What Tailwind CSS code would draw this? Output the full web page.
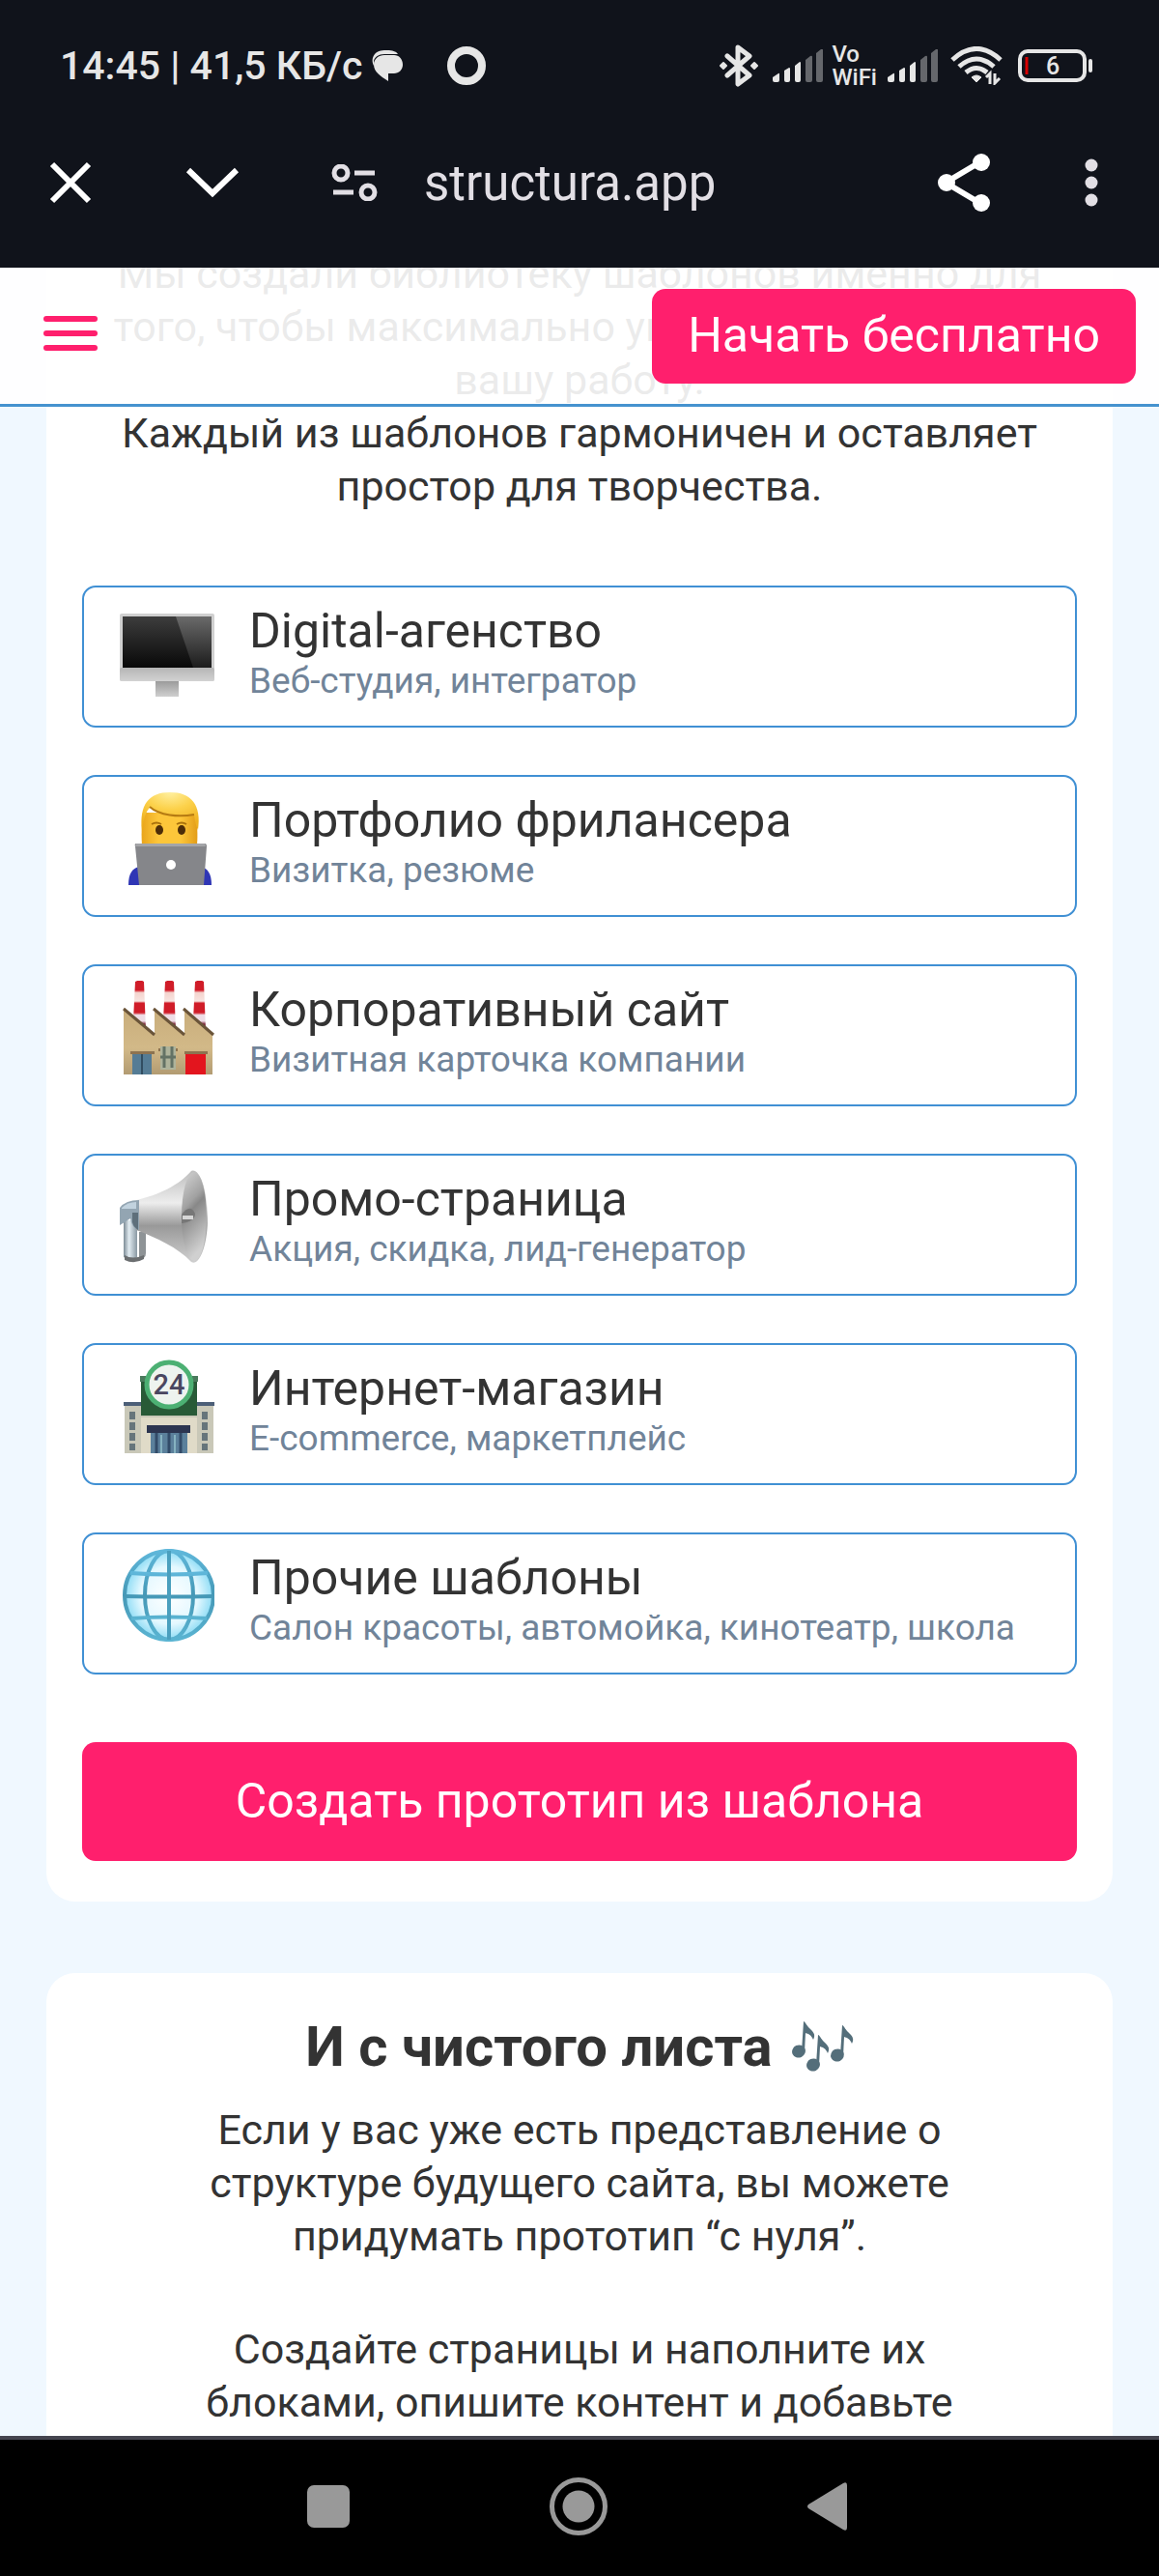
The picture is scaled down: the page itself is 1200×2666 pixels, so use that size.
<!DOCTYPE html>
<html lang="ru">
<head>
  <meta charset="utf-8">
  <meta name="viewport" content="width=device-width, initial-scale=1">
  <title>structura.app</title>
  <script src="https://cdn.jsdelivr.net/npm/@tailwindcss/browser@4"></script>
</head>
<body class="flex h-screen flex-col overflow-hidden bg-black font-['Roboto',sans-serif] text-[#333]">

  <!-- status bar + browser bar -->
  <div class="shrink-0 bg-[#10131b] pb-[35px]">
    <div class="flex h-[136px] items-center pl-[62px] pr-[68px] text-[#e6e6e6]">
      <span class="text-[41px] font-medium leading-none">14:45 | 41,5 КБ/с</span>
      <svg class="ml-[10px] h-8 w-8" viewBox="0 0 32 32" fill="currentColor">
        <path d="M2 16C0 12 0 8 3 4 6 0 12 0 16 0c5 0 9 1 11 4H13C7 4 3 7 2 11z"/>
        <path d="M13 5h10c5 0 9 4 9 10 0 5-4 9-9 9h-6v8C9 27 2 22 2 15 2 9 7 5 13 5z"/>
      </svg>
      <svg class="ml-[46px] h-10 w-10" viewBox="0 0 40 40" fill="none" stroke="currentColor" stroke-width="8">
        <circle cx="20" cy="20" r="16"/>
      </svg>

      <svg class="ml-auto h-11 w-10" viewBox="0 0 40 44" fill="none" stroke="currentColor" stroke-width="5" stroke-linejoin="round" stroke-linecap="round">
        <path d="M8 12l23 20-12 9V3l12 9L8 32"/>
        <path d="M4 19l3 3-3 3-3-3zM36 19l3 3-3 3-3-3z" fill="currentColor" stroke-width="2"/>
      </svg>
      <svg class="ml-[14px] h-[34px] w-[54px]" viewBox="0 0 54 34" fill="currentColor">
        <path d="M1 29l6-4q1-1 1 1v6q0 2-2 2H3q-2 0-2-2zM13 22l5-3q1 0 1 1v12q0 2-2 2h-2q-2 0-2-2zM24 17l5-4q1 0 1 1v18q0 2-2 2h-2q-2 0-2-2z"/>
        <path d="M35 11l5-4q2-1 2 1v24q0 2-2 2h-3q-2 0-2-2zM46 4l5-4q2-1 2 1v31q0 2-2 2h-3q-2 0-2-2z" opacity=".4"/>
      </svg>
      <span class="ml-2 text-2xl font-medium leading-6">Vo<br>WiFi</span>
      <svg class="ml-[10px] h-[34px] w-[54px]" viewBox="0 0 54 34" fill="currentColor">
        <path d="M1 29l6-4q1-1 1 1v6q0 2-2 2H3q-2 0-2-2zM13 22l5-3q1 0 1 1v12q0 2-2 2h-2q-2 0-2-2zM24 17l5-4q1 0 1 1v18q0 2-2 2h-2q-2 0-2-2z"/>
        <path d="M35 11l5-4q2-1 2 1v24q0 2-2 2h-3q-2 0-2-2zM46 4l5-4q2-1 2 1v31q0 2-2 2h-3q-2 0-2-2z" opacity=".4"/>
      </svg>
      <svg class="ml-3 h-10 w-[54px]" viewBox="0 0 54 40" fill="none" stroke="currentColor" stroke-width="5">
        <path d="M2 14q25-23 50 0M9 21q18-16 36 0M16 27q11-9 22 0"/>
        <path d="M22 32q5-4 10 0l-5 5z" fill="currentColor" stroke-width="1"/>
        <path d="M37 32l4-4v11M46 39V28M46 28v10l5-5" stroke-width="3"/>
      </svg>
      <svg class="ml-4 h-9 w-[78px]" viewBox="0 0 78 36" fill="none" stroke="currentColor" stroke-width="4">
        <rect x="2" y="3" width="67" height="30" rx="8"/>
        <path d="M75 13v10" stroke-linecap="round"/>
        <path d="M9 9v18" stroke="#d80000" stroke-width="3"/>
        <text x="36" y="27" text-anchor="middle" font-size="25" font-weight="500" fill="currentColor" stroke="none">6</text>
      </svg>
    </div>

    <div class="flex h-[106px] items-center pl-[51px] pr-[63px] text-[#e2dfe5]">
      <button aria-label="Закрыть" class="text-white">
        <svg class="h-11 w-11" viewBox="0 0 44 44" stroke="currentColor" stroke-width="6"><path d="M3 3l38 38M41 3L3 41"/></svg>
      </button>
      <button aria-label="Свернуть" class="ml-[97px] text-white">
        <svg class="h-8 w-14" viewBox="0 0 56 32" fill="none" stroke="currentColor" stroke-width="6"><path d="M3 3l25 24L53 3"/></svg>
      </button>
      <button aria-label="Настройки сайта" class="ml-[95px]">
        <svg class="h-[38px] w-12" viewBox="0 0 48 38" fill="none" stroke="currentColor" stroke-width="5">
          <circle cx="10" cy="9" r="7"/><circle cx="38" cy="29" r="7"/><path d="M24 9h21M2 29h21"/>
        </svg>
      </button>
      <span class="ml-12 text-[51px] leading-none">structura.app</span>
      <button aria-label="Поделиться" class="ml-auto text-white">
        <svg class="h-[62px] w-14" viewBox="0 0 56 62" fill="currentColor" stroke="currentColor" stroke-width="6">
          <path d="M9 31l37-22M9 31l37 22" fill="none"/>
          <g stroke="none"><circle cx="10" cy="31" r="9"/><circle cx="46" cy="10" r="9"/><circle cx="46" cy="52" r="9"/></g>
        </svg>
      </button>
      <button aria-label="Меню" class="ml-[97px]">
        <svg class="h-[50px] w-[14px]" viewBox="0 0 14 50" fill="currentColor"><circle cx="7" cy="7" r="6.5"/><circle cx="7" cy="25" r="6.5"/><circle cx="7" cy="43" r="6.5"/></svg>
      </button>
    </div>
  </div>

  <!-- page -->
  <div class="relative min-h-0 flex-1 overflow-hidden bg-[#f0f8ff]">
    <header class="absolute inset-x-0 top-0 z-10 flex h-36 items-center justify-between border-b-3 border-[#4592cf] bg-white/90 pl-[45px] pr-6">
      <button aria-label="Открыть меню" class="flex w-14 flex-col gap-[9px] pb-[6px]">
        <span class="h-[6px] rounded-full bg-[#ff1f6d]"></span>
        <span class="h-[6px] rounded-full bg-[#ff1f6d]"></span>
        <span class="h-[6px] rounded-full bg-[#ff1f6d]"></span>
      </button>
      <button class="h-[98px] rounded-[14px] bg-[#ff1f6d] px-[37px] text-[50px] text-white">Начать бесплатно</button>
    </header>

    <main>
      <section class="-mt-[21px] mx-12 rounded-b-[30px] bg-white px-[37px] pb-[42px]">
        <p class="text-center text-[43px] leading-[55px]">
          Мы создали библиотеку шаблонов именно для<br>
          того, чтобы максимально упростить и ускорить<br>
          вашу работу.<br>
          Каждый из шаблонов гармоничен и оставляет<br>
          простор для творчества.
        </p>

        <ul class="mt-[75px] flex flex-col gap-[49px]">
          <li>
            <a href="#" class="flex items-start gap-9 rounded-[14px] border-2 border-[#4090d4] px-[37px] pt-[15px] pb-6">
              <svg class="h-[98px] w-[98px] shrink-0" viewBox="0 0 98 98">
                <defs>
                  <linearGradient id="screen" x2="0" y2="1"><stop stop-color="#3d3d3d"/><stop offset="1" stop-color="#080808"/></linearGradient>
                  <linearGradient id="glare" x2="0" y2="1"><stop stop-color="#6a6a6a"/><stop offset="1" stop-color="#1c1c1c"/></linearGradient>
                  <linearGradient id="chin" x2="0" y2="1"><stop stop-color="#b5b5b5"/><stop offset="1" stop-color="#d2d2d2"/></linearGradient>
                  <linearGradient id="stand" x2="0" y2="1"><stop stop-color="#9b9b9b"/><stop offset="1" stop-color="#cfcfcf"/></linearGradient>
                </defs>
                <rect x="0" y="12" width="98" height="70" rx="2" fill="#d0d0d0"/>
                <rect x="0" y="68" width="98" height="14" rx="2" fill="url(#chin)"/>
                <rect x="3" y="15" width="92" height="53" fill="url(#screen)"/>
                <path d="M58 15h37v53H76z" fill="url(#glare)"/>
                <rect x="37" y="82" width="24" height="16" fill="url(#stand)"/>
              </svg>
              <div>
                <h3 class="text-[50px] leading-[60px]">Digital-агенство</h3>
                <p class="text-[37px] leading-[44px] text-[#718499]">Веб-студия, интегратор</p>
              </div>
            </a>
          </li>
          <li>
            <a href="#" class="flex items-start gap-9 rounded-[14px] border-2 border-[#4090d4] px-[37px] pt-[15px] pb-6">
              <svg class="h-[98px] w-[98px] shrink-0" viewBox="0 0 98 98">
                <defs>
                  <radialGradient id="hair" cx=".5" cy="0" r=".9"><stop stop-color="#fff0a0"/><stop offset=".5" stop-color="#fcd14a"/><stop offset="1" stop-color="#eeb021"/></radialGradient>
                  <linearGradient id="face"><stop stop-color="#e9a51c"/><stop offset=".3" stop-color="#fdc63a"/><stop offset=".7" stop-color="#fdc63a"/><stop offset="1" stop-color="#e39d18"/></linearGradient>
                </defs>
                <path d="M9 97c0-12 4-18 12-19h62c8 1 12 7 12 19z" fill="#2f36b5"/>
                <path d="M23 56c-1-14 0-28 1-34h54c2 8 3 20 2 34z" fill="url(#face)"/>
                <path d="M23 40C20 14 30 1 52 1s33 13 29 39c-2-5-3-8-4-16-16 3-36 1-45-8-5 4-7 12-9 24z" fill="url(#hair)"/>
                <path d="M31 16c10 9 30 11 46 8" fill="none" stroke="#b57a12" stroke-width="2"/>
                <path d="M33 34q5-3 10 0M59 34q5-3 10 0" fill="none" stroke="#a8700c" stroke-width="2"/>
                <ellipse cx="41" cy="40" rx="4" ry="5" fill="#4c2c08"/><ellipse cx="64" cy="40" rx="4" ry="5" fill="#4c2c08"/>
                <path d="M17 54h71q2 0 2 3l-3 40H20l-4-40q-1-3 1-3z" fill="#85868a"/>
                <path d="M17 54h71l1 3H16z" fill="#a4a5a8"/>
                <circle cx="53" cy="76" r="5" fill="#fff"/>
              </svg>
              <div>
                <h3 class="text-[50px] leading-[60px]">Портфолио фрилансера</h3>
                <p class="text-[37px] leading-[44px] text-[#718499]">Визитка, резюме</p>
              </div>
            </a>
          </li>
          <li>
            <a href="#" class="flex items-start gap-9 rounded-[14px] border-2 border-[#4090d4] px-[37px] pt-[15px] pb-6">
              <svg class="h-[98px] w-[98px] shrink-0" viewBox="0 0 98 98">
                <defs>
                  <linearGradient id="wall" x2="0" y2="1"><stop stop-color="#c9ad7b"/><stop offset=".6" stop-color="#d2b988"/><stop offset="1" stop-color="#b29b72"/></linearGradient>
                  <linearGradient id="chimney" x2="0" y2="1">
                    <stop stop-color="#d01c28"/><stop offset=".2" stop-color="#d01c28"/><stop offset=".25" stop-color="#f4d3cd"/><stop offset=".42" stop-color="#f7e4e0"/>
                    <stop offset=".46" stop-color="#d01c28"/><stop offset=".65" stop-color="#d01c28"/><stop offset=".7" stop-color="#eedde6"/><stop offset=".82" stop-color="#eedde6"/><stop offset=".88" stop-color="#7c2338"/>
                  </linearGradient>
                </defs>
                <path d="M16 1q5-3 9 0l2 50-13-10zM47 1q5-3 9 0l2 50-13-10zM78 1q5-3 9 0l2 50-13-10z" fill="url(#chimney)"/>
                <path d="M4 29l32 27V29l31 27V29l29 27v41H4z" fill="url(#wall)"/>
                <path d="M4 29l32 27M35 29l32 27M66 29l31 27" fill="none" stroke="#6a5439" stroke-width="3"/>
                <path d="M11 73h25v3H11zM67 73h24v3H67zM40 70h20v3H40z" fill="#8d7350"/>
                <path d="M13 76h20v21H13z" fill="#557c95"/><path d="M23 76v21" stroke="#314d61" stroke-width="2"/>
                <path d="M42 68h16v24H42z" fill="#aeb39b"/><path d="M46 68v22M54 68v22M42 79h16" stroke="#637265" stroke-width="3"/>
                <path d="M68 76h21v21H68z" fill="#e3151e"/>
              </svg>
              <div>
                <h3 class="text-[50px] leading-[60px]">Корпоративный сайт</h3>
                <p class="text-[37px] leading-[44px] text-[#718499]">Визитная карточка компании</p>
              </div>
            </a>
          </li>
          <li>
            <a href="#" class="flex items-start gap-9 rounded-[14px] border-2 border-[#4090d4] px-[37px] pt-[15px] pb-6">
              <svg class="h-[98px] w-[98px] shrink-0" viewBox="0 0 98 98">
                <defs>
                  <linearGradient id="horn" x2="0" y2="1"><stop stop-color="#bdbdbd"/><stop offset=".35" stop-color="#ededed"/><stop offset=".6" stop-color="#999"/><stop offset="1" stop-color="#cfcfcf"/></linearGradient>
                  <linearGradient id="bell" x2=".3" y2="1"><stop stop-color="#d6d6d6"/><stop offset=".4" stop-color="#a2a2a2"/><stop offset=".5" stop-color="#888"/><stop offset="1" stop-color="#d0d0d0"/></linearGradient>
                  <linearGradient id="grip"><stop stop-color="#7c8b95"/><stop offset=".4" stop-color="#e1ebf1"/><stop offset="1" stop-color="#8998a2"/></linearGradient>
                </defs>
                <path d="M20 64h7v22q0 6-7 6z" fill="#8e9396"/>
                <path d="M4 52h14v38q-7 5-14 0z" fill="url(#grip)"/>
                <path d="M5 88q8 5 20 0v4q-10 6-20 1z" fill="#6b6e70"/>
                <path d="M17 31C40 26 62 15 74 1c8-4 17 18 17 48S82 100 74 95C60 80 38 70 17 62z" fill="url(#horn)"/>
                <ellipse cx="77" cy="48" rx="13" ry="46" fill="url(#bell)"/>
                <path d="M64 46q9-12 14-1 0 8-14 10z" fill="#777"/>
                <path d="M65 49l11 0" stroke="#d6d6d6" stroke-width="4"/>
                <path d="M0 39q6-8 20-8v31q-7-1-9-12L0 57z" fill="#93a5b2"/>
                <path d="M2 39q6-6 15-6v7H2z" fill="#c1d2de"/>
                <path d="M13 44h6v18q-5-3-6-8z" fill="#5e6f7b"/>
              </svg>
              <div>
                <h3 class="text-[50px] leading-[60px]">Промо-страница</h3>
                <p class="text-[37px] leading-[44px] text-[#718499]">Акция, скидка, лид-генератор</p>
              </div>
            </a>
          </li>
          <li>
            <a href="#" class="flex items-start gap-9 rounded-[14px] border-2 border-[#4090d4] px-[37px] pt-[15px] pb-6">
              <svg class="h-[98px] w-[98px] shrink-0" viewBox="0 0 98 98">
                <path d="M5 47h92v50H5z" fill="#c9c8b8"/>
                <path d="M4 44h94v4H4z" fill="#4c5f78"/>
                <path d="M22 60h58v37H22z" fill="#e0dbc8"/>
                <path d="M13 54v40M88 54v40" stroke="#66757b" stroke-width="6" stroke-dasharray="8 3"/>
                <path d="M22 20h58v38H22z" fill="#285a37"/>
                <path d="M21 17h6v6h-6zM75 17h6v6h-6z" fill="#4a7a5c"/>
                <circle cx="51" cy="26" r="23" fill="#eef3ef" stroke="#4cb073" stroke-width="5"/>
                <text x="51" y="36" text-anchor="middle" font-size="29" font-weight="500" fill="#4a4660">24</text>
                <path d="M28 68h45v8H28z" fill="#2c3550"/>
                <path d="M32 76h38v21H32z" fill="#5b809b"/>
                <path d="M38 76v21M51 76v21M63 76v21" stroke="#324b68" stroke-width="3"/>
                <path d="M43 78v19M57 78v19" stroke="#86b2c0" stroke-width="2"/>
              </svg>
              <div>
                <h3 class="text-[50px] leading-[60px]">Интернет-магазин</h3>
                <p class="text-[37px] leading-[44px] text-[#718499]">E-commerce, маркетплейс</p>
              </div>
            </a>
          </li>
          <li>
            <a href="#" class="flex items-start gap-9 rounded-[14px] border-2 border-[#4090d4] px-[37px] pt-[15px] pb-6">
              <svg class="h-[98px] w-[98px] shrink-0" viewBox="0 0 98 98">
                <defs>
                  <radialGradient id="globe"><stop stop-color="#fff"/><stop offset=".65" stop-color="#e4f8ff"/><stop offset="1" stop-color="#8ddcf5"/></radialGradient>
                  <linearGradient id="grid" x2="0" y2="1"><stop stop-color="#5fb7da"/><stop offset=".5" stop-color="#4598b6"/><stop offset="1" stop-color="#5ab4d2"/></linearGradient>
                </defs>
                <g stroke="url(#grid)" stroke-width="4">
                  <circle cx="51" cy="48" r="46" fill="url(#globe)"/>
                  <ellipse cx="51" cy="48" rx="25" ry="46" fill="none"/>
                  <path d="M11 25q40 3 80 0M5 49q46 1 92 0M12 72q39-3 78 0" fill="none"/>
                </g>
                <path d="M49 2h4v92h-4z" fill="#4a9fbe"/>
              </svg>
              <div>
                <h3 class="text-[50px] leading-[60px]">Прочие шаблоны</h3>
                <p class="text-[37px] leading-[44px] text-[#718499]">Салон красоты, автомойка, кинотеатр, школа</p>
              </div>
            </a>
          </li>
        </ul>

        <button class="mt-[70px] h-[123px] w-full rounded-[14px] bg-[#ff1f6d] text-[50px] text-white">Создать прототип из шаблона</button>
      </section>

      <section class="mx-12 mt-[74px] rounded-[30px] bg-white px-[37px] py-[43px] text-center text-[43px] leading-[55px]">
        <h2 class="flex items-center justify-center gap-5 text-[58px] font-bold leading-[66px]">
          И с чистого листа
          <svg class="h-[54px] w-16" viewBox="0 0 64 54" fill="#546e7a">
            <g id="note"><ellipse cx="7" cy="32" rx="7" ry="6.5" transform="rotate(-25 7 32)"/><path d="M10 32L12 1c1 0 2 2 5 6 5 5 8 7 5 13-2-5-5-6-8-7l-1 20z"/></g>
            <use href="#note" x="15" y="14"/>
            <use href="#note" x="40" y="4"/>
          </svg>
        </h2>
        <p class="mt-[26px]">
          Если у вас уже есть представление о<br>
          структуре будущего сайта, вы можете<br>
          придумать прототип “с нуля”.
        </p>
        <p class="mt-[62px]">
          Создайте страницы и наполните их<br>
          блоками, опишите контент и добавьте<br>
          комментарии.
        </p>
      </section>
    </main>
  </div>

  <!-- system navigation -->
  <nav class="flex h-[145px] shrink-0 justify-center gap-[207px] border-t-4 border-[#45454f] bg-black pr-1 pt-[39px] text-[#999]">
    <button aria-label="Недавние" class="h-[60px]">
      <svg class="h-11 w-11" viewBox="0 0 44 44" fill="currentColor"><rect width="44" height="44" rx="7"/></svg>
    </button>
    <button aria-label="Домой" class="h-[60px]">
      <svg class="h-[60px] w-[60px]" viewBox="0 0 60 60" fill="currentColor"><circle cx="30" cy="30" r="27.5" fill="none" stroke="currentColor" stroke-width="5"/><circle cx="30" cy="30" r="16.5"/></svg>
    </button>
    <button aria-label="Назад" class="h-[60px]">
      <svg class="h-[50px] w-[42px]" viewBox="0 0 42 50" fill="currentColor"><path d="M1 23L37 1q4-2 4 2v44q0 4-4 2L1 27q-2-2 0-4z"/></svg>
    </button>
  </nav>
</body>
</html>
